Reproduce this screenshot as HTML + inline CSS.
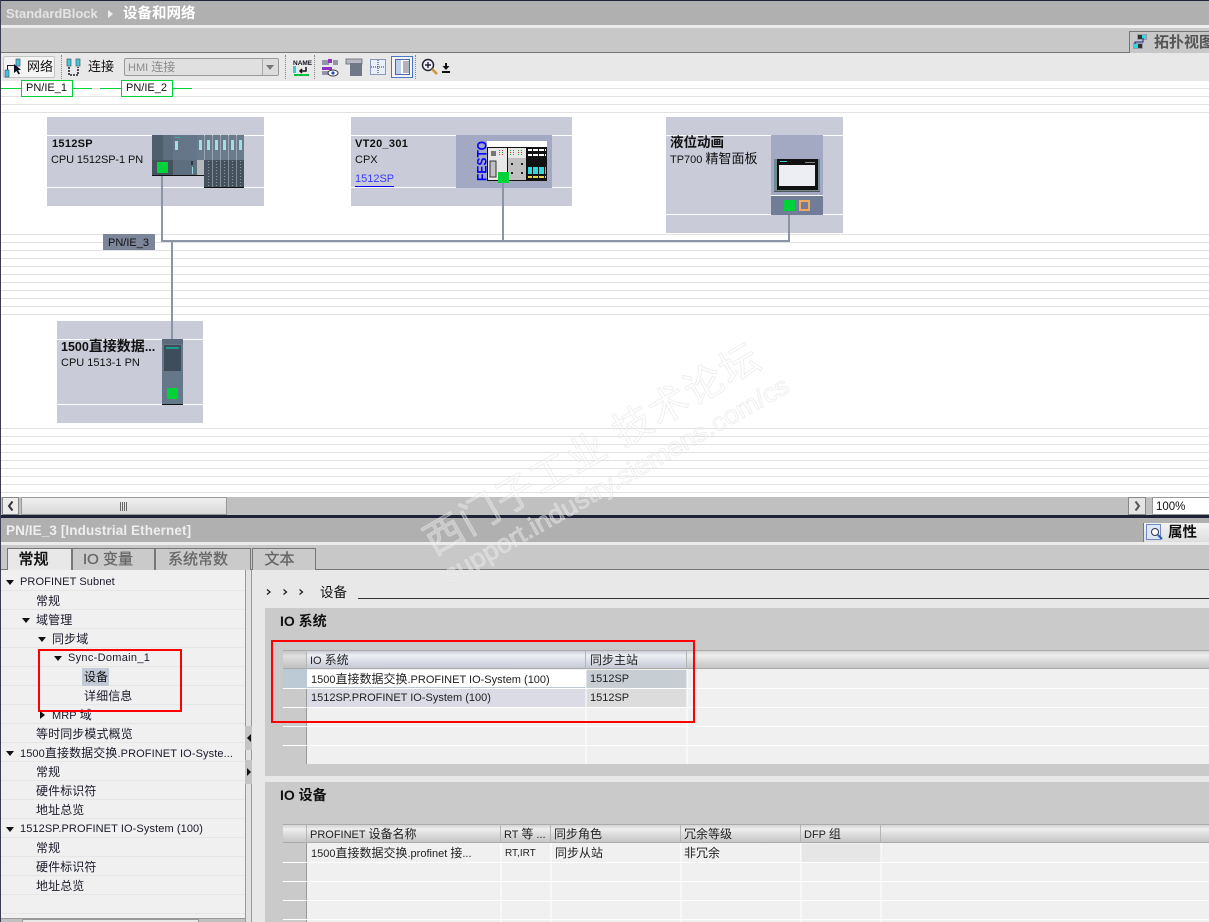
<!DOCTYPE html>
<html><head><meta charset="utf-8"><style>
html,body{margin:0;padding:0;width:1209px;height:922px;overflow:hidden;background:#fff}
body{position:relative;font:11px "Liberation Sans","Noto Sans CJK SC",sans-serif;color:#111}
div,span.a,a.a{position:absolute;white-space:nowrap;box-sizing:border-box}
i{font-style:normal;font-size:12px}
.r{left:1px;width:244px;height:19px;border-bottom:1px solid #e6e6e6;line-height:21px;color:#1a1a2a;letter-spacing:.1px}
.t{line-height:15px}
.up{border-left:4px solid transparent;border-right:4px solid transparent;border-top:5px solid #111;width:0;height:0}
.rt{border-top:4px solid transparent;border-bottom:4px solid transparent;border-left:5px solid #111;width:0;height:0}
.tab{top:548px;height:22px;background:#cacaca;border:1px solid #777;border-bottom:none;text-align:center;line-height:21px;font-size:15px;font-weight:normal;color:#666;-webkit-text-stroke:.3px #666}
.tab i{font-size:15px}
.sep{top:55px;height:24px;width:0;border-left:1px dotted #888}
.th{height:19px;background:linear-gradient(#d4d4d4,#eeeeee 25%,#dcdcdc 55%,#c6c6c6);border-top:1px solid #aaa;border-right:1px solid #b5b5b5;border-bottom:1px solid #aaa;line-height:19px;padding-left:3px;color:#222}
.th2{background:linear-gradient(#c8ccd4,#eef0f4 25%,#dde0e8 55%,#c6cad4)}
.c{height:19px;line-height:18px;padding-left:4px;color:#222}
</style></head><body>
<!-- chrome -->
<div style="left:0;top:0;width:1209px;height:1px;background:#1f2338"></div>
<div style="left:0;top:1px;width:1209px;height:24px;background:#b0b0b0"></div>
<div style="left:0;top:25px;width:1209px;height:3px;background:#ececec"></div>
<div style="left:0;top:28px;width:1209px;height:24px;background:#c8c8c8"></div>
<div style="left:0;top:52px;width:1209px;height:1px;background:#777"></div>
<div style="left:0;top:53px;width:1209px;height:28px;background:#e8e8e8"></div>
<div style="left:6px;top:5px;font-size:13px;font-weight:bold;color:#e4e4e4;line-height:18px">StandardBlock</div>
<div class="rt" style="left:108px;top:10px;border-left-color:#eee"></div>
<div style="left:123px;top:5px;font-size:14.5px;font-weight:bold;color:#fff;line-height:18px">设备和网络</div>
<div style="left:1129px;top:31px;width:80px;height:22px;background:#c8c8c8;border-left:1px solid #777;border-top:1px solid #777;font-size:15px;font-weight:bold;color:#555;padding-left:24px;line-height:21px;overflow:hidden">拓扑视图</div>
<svg style="position:absolute;left:1132px;top:33px" width="16" height="17" shape-rendering="crispEdges">
<rect x="5" y="1" width="10" height="6" fill="#9a9eac"/><rect x="6" y="2" width="4" height="4" fill="#333"/><rect x="10" y="2" width="4" height="4" fill="#30d8e0"/>
<rect x="1" y="10" width="10" height="6" fill="#9a9eac"/><rect x="2" y="11" width="4" height="4" fill="#30d8e0"/><rect x="6" y="11" width="4" height="4" fill="#333"/>
<path d="M11 5V9H3V11" fill="none" stroke="#112080" stroke-width="1"/></svg>

<!-- canvas lines -->
<svg style="position:absolute;left:0;top:81px" width="1209" height="416" shape-rendering="crispEdges">
<g stroke="#e2e2e2" stroke-width="1">
<path d="M0 7.5H1209M0 15.5H1209M0 23.5H1209M0 31.5H1209"/>
<path d="M0 153.5H1209M0 161.5H1209M0 169.5H1209M0 177.5H1209M0 185.5H1209M0 193.5H1209M0 201.5H1209M0 209.5H1209M0 217.5H1209M0 225.5H1209M0 233.5H1209"/>
<path d="M0 347.5H1209M0 355.5H1209M0 363.5H1209M0 371.5H1209M0 379.5H1209M0 387.5H1209M0 395.5H1209M0 403.5H1209M0 411.5H1209"/>
</g></svg>

<!-- subnets -->
<svg style="position:absolute;left:0;top:80px" width="200" height="18" shape-rendering="crispEdges">
<path d="M1 8.5H92M100 8.5H192" stroke="#00d23a" stroke-width="1.4"/></svg>
<div style="left:21px;top:80px;width:52px;height:17px;background:#fff;border:1px solid #00d23a;text-align:center;line-height:15px;font-size:11px;padding-right:1px">PN/IE_1</div>
<div style="left:121px;top:80px;width:52px;height:17px;background:#fff;border:1px solid #00d23a;text-align:center;line-height:15px;font-size:11px;padding-right:1px">PN/IE_2</div>

<!-- device boxes -->
<div style="left:47px;top:117px;width:217px;height:89px;background:#c9cbd9"></div>
<div style="left:351px;top:117px;width:221px;height:89px;background:#c9cbd9"></div>
<div style="left:666px;top:117px;width:177px;height:116px;background:#c9cbd9"></div>
<div style="left:57px;top:321px;width:146px;height:102px;background:#c9cbd9"></div>
<svg style="position:absolute;left:0;top:0" width="1209" height="500" shape-rendering="crispEdges">
<g fill="#fff">
<rect x="47" y="135" width="217" height="1"/><rect x="47" y="187" width="217" height="1"/>
<rect x="351" y="135" width="221" height="1"/><rect x="351" y="187" width="221" height="1"/>
<rect x="666" y="135" width="177" height="1"/><rect x="666" y="214" width="177" height="1"/>
<rect x="57" y="339" width="146" height="1"/><rect x="57" y="404" width="146" height="1"/>
</g>
<!-- CPU 1512SP -->
<rect x="152" y="135" width="45" height="40" fill="#647687"/>
<rect x="152" y="135" width="11" height="25" fill="#4f5e6c"/>
<rect x="163" y="135" width="10" height="25" fill="#5d6e7e"/>
<rect x="152" y="160" width="21" height="15" fill="#46535f"/>
<rect x="173" y="160" width="24" height="15" fill="#5d6e7e"/>
<rect x="175" y="137" width="6" height="1" fill="#3aa89a"/>
<rect x="175" y="141" width="3" height="9" fill="#a8dde0"/>
<rect x="191" y="161" width="2" height="4" fill="#2c3640"/><rect x="192" y="167" width="1" height="7" fill="#9fd8dc"/>
<rect x="152" y="175" width="52" height="1" fill="#111"/>
<rect x="197" y="160" width="7" height="15" fill="#b5b8bc"/>
<rect x="197" y="135" width="7.5" height="25" fill="#6a7c8c"/><rect x="199" y="140" width="3" height="10" fill="#a8dde0"/>
<rect x="205" y="135" width="7.5" height="25" fill="#6a7c8c"/><rect x="207" y="140" width="3" height="10" fill="#a8dde0"/>
<rect x="213" y="135" width="7.5" height="25" fill="#6a7c8c"/><rect x="215" y="140" width="3" height="10" fill="#a8dde0"/>
<rect x="221" y="135" width="7.5" height="25" fill="#6a7c8c"/><rect x="223" y="140" width="3" height="10" fill="#a8dde0"/>
<rect x="229" y="135" width="7.5" height="25" fill="#6a7c8c"/><rect x="231" y="140" width="3" height="10" fill="#a8dde0"/>
<rect x="237" y="135" width="7" height="25" fill="#6a7c8c"/><rect x="239" y="140" width="3" height="10" fill="#a8dde0"/>
<rect x="204" y="160" width="40" height="27" fill="#46535f"/>
<path d="M212.5 160V187M220.5 160V187M228.5 160V187M236.5 160V187" stroke="#7e8c98" stroke-width="1" fill="none"/>
<path d="M208.5 161V186M216.5 161V186M224.5 161V186M232.5 161V186M240.5 161V186" stroke="#8a96a2" stroke-width="1" stroke-dasharray="1 2" fill="none"/>
<rect x="204" y="187" width="40" height="1" fill="#111"/>
<rect x="157" y="162" width="11" height="11" fill="#00d23a"/>
<!-- Festo -->
<rect x="456" y="135" width="96" height="53" fill="#a4a9c3"/>
<rect x="487" y="141" width="60" height="6" fill="#fff"/>
<rect x="487" y="147" width="60" height="34" fill="#111"/>
<rect x="488" y="148" width="19" height="32" fill="#e8e8e8"/>
<rect x="508" y="148" width="18" height="32" fill="#c0c0c0"/>
<rect x="508" y="148" width="18" height="10" fill="#e8e8e8"/>
<rect x="490" y="161" width="6" height="16" fill="#c0c0c0" stroke="#333" stroke-width="1"/>
<rect x="491" y="151" width="5" height="5" fill="#777"/>
<path d="M499 150h1v1h-1zM502 150h1v1h-1zM499 154h1v1h-1zM502 154h1v1h-1z" fill="#d33"/><path d="M499 152h1v1h-1zM502 152h1v1h-1z" fill="#2a2"/>
<path d="M510 150h1v1h-1zM513 150h1v1h-1zM518 150h1v1h-1zM521 150h1v1h-1zM510 154h1v1h-1zM513 154h1v1h-1zM518 154h1v1h-1zM521 154h1v1h-1z" fill="#2a2"/>
<path d="M510 152h1v1h-1zM513 152h1v1h-1zM518 152h1v1h-1zM521 152h1v1h-1z" fill="#d33"/>
<path d="M511 163h2v2h-2zM521 163h2v2h-2zM511 172h2v2h-2zM521 172h2v2h-2z" fill="#222"/>
<rect x="528" y="149" width="18" height="2" fill="#fff"/><rect x="528" y="154" width="18" height="2" fill="#fff"/>
<rect x="528" y="167" width="18" height="7" fill="#30d8e0"/>
<rect x="528" y="176" width="18" height="2" fill="#e8d848"/>
<path d="M532.5 147V181M538.5 147V181M544.5 147V181" stroke="#111" stroke-width="1.4" fill="none"/>
<rect x="498" y="172" width="11" height="11" fill="#00d23a"/>
<!-- HMI -->
<rect x="771" y="135" width="52" height="60" fill="#a4a9c3"/>
<rect x="771" y="195" width="52" height="1" fill="#fff"/>
<rect x="771" y="196" width="52" height="19" fill="#717d97"/>
<rect x="774" y="159" width="46" height="33" fill="#6f8a90"/>
<rect x="777" y="159" width="41" height="31" fill="#111"/>
<rect x="779" y="165" width="36" height="21" fill="#eceef4"/>
<rect x="780" y="161" width="7" height="1" fill="#40c8d0"/><rect x="805" y="162" width="10" height="1" fill="#888"/>
<rect x="774" y="191" width="46" height="1" fill="#555"/>
<rect x="784" y="200" width="11" height="11" fill="#00d23a"/>
<rect x="800" y="201" width="9" height="9" fill="#717d97" stroke="#f0a860" stroke-width="2"/>
<!-- CPU 1513 -->
<rect x="162" y="339" width="21" height="65" fill="#64788a"/>
<rect x="162" y="339" width="21" height="5" fill="#5a6a7a"/>
<rect x="164" y="345" width="17" height="26" fill="#3f4c5c"/>
<rect x="166" y="347" width="13" height="2" fill="#1f9a8e"/>
<rect x="162" y="404" width="21" height="1" fill="#111"/>
<rect x="167" y="388" width="11" height="11" fill="#00d23a"/>
<!-- wires -->
<g fill="#8c95a6">
<rect x="161" y="176" width="2" height="66"/>
<rect x="161" y="240" width="629" height="2"/>
<rect x="171" y="242" width="2" height="97"/>
<rect x="502" y="183" width="2" height="58"/>
<rect x="788" y="215" width="2" height="26"/>
</g>
<rect x="103" y="234" width="52" height="16" fill="#7d8599"/>
</svg>
<div style="left:103px;top:235px;width:52px;text-align:center;line-height:16px;color:#111;font-size:11px;padding-right:1px">PN/IE_3</div>

<div class="t" style="left:52px;top:137px;font-weight:bold;letter-spacing:.3px">1512SP</div>
<div class="t" style="left:51px;top:153px;letter-spacing:-.1px">CPU 1512SP-1 PN</div>
<div class="t" style="left:355px;top:137px;font-weight:bold;letter-spacing:.3px">VT20_301</div>
<div class="t" style="left:355px;top:153px">CPX</div>
<div class="t" style="left:355px;top:172px;height:15px;color:#3a3aff;border-bottom:1px solid #00f">1512SP</div>
<div class="t" style="left:670px;top:135px;font-weight:bold"><i style="font-size:13.5px">液位动画</i></div>
<div class="t" style="left:670px;top:151px">TP700 <i style="font-size:13px">精智面板</i></div>
<div class="t" style="left:61px;top:339px;font-weight:bold;font-size:12.500px">1500<i style="font-size:14px">直接数据</i>...</div>
<div class="t" style="left:61px;top:356px">CPU 1513-1 PN</div>
<div style="left:477px;top:141px;width:10px;height:40px"><svg width="10" height="40"><text transform="translate(9.500,40) rotate(-90)" font-family="Liberation Sans" font-weight="bold" font-size="13.500" fill="#0000ff" textLength="40" lengthAdjust="spacingAndGlyphs">FESTO</text></svg></div>

<!-- toolbar -->
<div style="left:3px;top:56px;width:52px;height:22px;background:#f4f4f4;border:1px solid #c4c4c4;border-radius:2px;font-size:13px;line-height:20px;padding-left:23px">网络</div>
<svg style="position:absolute;left:0;top:53px" width="460" height="28">
<path d="M7.500 17V12.500H15" fill="none" stroke="#223" stroke-width="1"/>
<rect x="5" y="17" width="4" height="7" fill="#3cc8d8" stroke="#556" stroke-width=".7"/>
<rect x="16" y="6" width="4" height="7" fill="#3cc8d8" stroke="#556" stroke-width=".7"/>
<path d="M14 11l0 9 2.500-2 2 3.500 1.500-1-2-3.300 3-.5z" fill="#112"/>
<rect x="67" y="6" width="4" height="7" fill="#3cc8d8" stroke="#556" stroke-width=".7"/>
<rect x="76" y="6" width="4" height="7" fill="#3cc8d8" stroke="#556" stroke-width=".7"/>
<path d="M69 14V22H78V14" fill="none" stroke="#223" stroke-width="1.600" stroke-dasharray="2 1"/>
<text x="293" y="12" font-family="Liberation Sans" font-size="6.500" font-weight="bold" fill="#112">NAME</text>
<rect x="293" y="13" width="3" height="7" fill="#3cc8d8"/>
<path d="M306 14v4h-6M302 16l-2 2 2 2" fill="none" stroke="#112" stroke-width="1.500"/>
<rect x="294" y="21" width="15" height="2" fill="#00c040"/>
<rect x="322" y="7" width="7" height="5" fill="#8f96a8"/><rect x="333" y="7" width="5" height="5" fill="#8f96a8"/>
<rect x="328" y="6" width="4" height="4" fill="#9030c0"/><rect x="322" y="14" width="10" height="3" fill="#9030c0"/>
<rect x="322" y="18" width="6" height="4" fill="#8f96a8"/>
<ellipse cx="333" cy="20" rx="5" ry="3" fill="#fff" stroke="#334"/><circle cx="333" cy="20" r="1.600" fill="#2050c0"/>
<rect x="346" y="6" width="16" height="5" fill="#b8b8c0" stroke="#667" stroke-width=".8"/>
<rect x="350" y="10" width="12" height="13" fill="#707888"/>
<rect x="370.500" y="6.500" width="15" height="15" fill="#e8eefa" stroke="#8898b8"/>
<path d="M371 14h14M378 7v14" stroke="#334" stroke-dasharray="1 1"/>
<rect x="391.500" y="3.500" width="21" height="21" fill="#f4f4f4" stroke="#4a78c8"/>
<rect x="395.500" y="6.500" width="14" height="15" fill="#fff" stroke="#4a68a8"/>
<rect x="396" y="7" width="5" height="14" fill="#bcd0ee"/>
<path d="M403 9h6M403 11h6M403 13h6M403 15h6M403 17h6M403 19h6" stroke="#667" stroke-width="1"/>
<circle cx="428" cy="12" r="5.500" fill="#eef" stroke="#223" stroke-width="1.500"/>
<path d="M425 12h6M428 9v6" stroke="#223" stroke-width="1.400"/>
<path d="M432 16l5 5" stroke="#c89838" stroke-width="2.500"/>
<path d="M445 10h2v3h2.500l-3.500 4-3.500-4h2.500z" fill="#111"/><rect x="442" y="18" width="8" height="2" fill="#111"/>
</svg>
<div class="sep" style="left:61px"></div><div class="sep" style="left:285px"></div><div class="sep" style="left:314px"></div><div class="sep" style="left:415px"></div>
<div style="left:88px;top:57px;font-size:13px;line-height:20px">连接</div>
<div style="left:124px;top:58px;width:155px;height:18px;background:#e0e0e0;border:1px solid #999;border-radius:2px;color:#8a8a8a;line-height:17px;padding-left:3px">HMI <i>连接</i></div>
<div style="left:262px;top:59px;width:16px;height:16px;background:#dcdcdc;border-left:1px solid #aaa"></div>
<div class="up" style="left:266px;top:65px;border-top-color:#777"></div>

<!-- h scroll -->
<div style="left:0;top:497px;width:1209px;height:18px;background:#c0c0c0"></div>
<div style="left:2px;top:497px;width:17px;height:18px;background:#ececec;border:1px solid #888"></div>
<svg style="position:absolute;left:2px;top:497px" width="17" height="18"><path d="M10.500 4.500L7 9l3.500 4.500" fill="none" stroke="#333" stroke-width="2"/></svg>
<div style="left:21px;top:497px;width:206px;height:18px;background:linear-gradient(#f0f0f0,#d8d8d8);border:1px solid #999"></div>
<div style="left:120px;top:502px;width:8px;height:9px;background:repeating-linear-gradient(90deg,#666 0 1px,transparent 1px 2px)"></div>
<div style="left:1128px;top:497px;width:18px;height:18px;background:#e4e4e4;border:1px solid #888"></div>
<svg style="position:absolute;left:1128px;top:497px" width="18" height="18"><path d="M7.500 4.500L11 9l-3.500 4.500" fill="none" stroke="#555" stroke-width="2"/></svg>
<div style="left:1152px;top:497px;width:57px;height:18px;background:#fff;border:1px solid #999;border-right:none;padding-left:3px;line-height:18px;font-size:11.500px">100%</div>

<!-- inspector chrome -->
<div style="left:0;top:515px;width:1209px;height:3px;background:#1f2338"></div>
<div style="left:0;top:518px;width:1209px;height:24px;background:#b0b0b0"></div>
<div style="left:0;top:542px;width:1209px;height:3px;background:#ececec"></div>
<div style="left:0;top:545px;width:1209px;height:24px;background:#c8c8c8"></div>
<div style="left:0;top:569px;width:1209px;height:1px;background:#777"></div>
<div style="left:0;top:570px;width:1209px;height:352px;background:#e8e8e8"></div>
<div style="left:6px;top:522px;font-size:13.500px;font-weight:bold;color:#eee;line-height:18px;letter-spacing:.1px">PN/IE_3 [Industrial Ethernet]</div>
<div style="left:1143px;top:523px;width:66px;height:19px;background:linear-gradient(#f4f4f4,#dedede);border-left:1px solid #777;font-size:14.500px;font-weight:bold;color:#111;padding-left:24px;line-height:21px">属性</div>
<svg style="position:absolute;left:1146px;top:524px" width="18" height="18"><rect x=".5" y=".5" width="14" height="15" fill="#dfe6fa" stroke="#7088c8"/><circle cx="9" cy="8" r="3.500" fill="#fff" stroke="#334"/><path d="M12 11l4 4" stroke="#2060b0" stroke-width="2"/></svg>
<div class="tab" style="left:7px;width:65px;background:#e8e8e8;color:#111;height:23px;padding-right:12px;-webkit-text-stroke:.5px #111"><i>常规</i></div>
<div class="tab" style="left:72px;width:83px;padding-right:11px">IO 变量</div>
<div class="tab" style="left:155px;width:96px;padding-right:10px">系统常数</div>
<div class="tab" style="left:252px;width:64px;padding-right:9px">文本</div>

<!-- tree -->
<div style="left:1px;top:570px;width:244px;height:352px;background:#f0f0f0"></div>
<div class="r" style="top:572px;padding-left:19px">PROFINET Subnet</div><div class="up" style="left:6px;top:580px"></div>
<div class="r" style="top:591px;padding-left:35px"><i>常规</i></div>
<div class="r" style="top:610px;padding-left:35px"><i>域管理</i></div><div class="up" style="left:22px;top:618px"></div>
<div class="r" style="top:629px;padding-left:51px"><i>同步域</i></div><div class="up" style="left:38px;top:637px"></div>
<div class="r" style="top:648px;padding-left:67px;letter-spacing:.3px">Sync-Domain_1</div><div class="up" style="left:54px;top:656px"></div>
<div class="r" style="top:667px"></div><div style="left:82px;top:668px;width:27px;height:18px;background:#c1cad6;line-height:18px;padding-left:2px"><i>设备</i></div>
<div class="r" style="top:686px;padding-left:83px"><i>详细信息</i></div>
<div class="r" style="top:705px;padding-left:51px">MRP <i>域</i></div><div class="rt" style="left:40px;top:711px"></div>
<div class="r" style="top:724px;padding-left:35px"><i>等时同步模式概览</i></div>
<div class="r" style="top:743px;padding-left:19px">1500<i>直接数据交换</i>.PROFINET IO-Syste...</div><div class="up" style="left:6px;top:751px"></div>
<div class="r" style="top:762px;padding-left:35px"><i>常规</i></div>
<div class="r" style="top:781px;padding-left:35px"><i>硬件标识符</i></div>
<div class="r" style="top:800px;padding-left:35px"><i>地址总览</i></div>
<div class="r" style="top:819px;padding-left:19px">1512SP.PROFINET IO-System (100)</div><div class="up" style="left:6px;top:827px"></div>
<div class="r" style="top:838px;padding-left:35px"><i>常规</i></div>
<div class="r" style="top:857px;padding-left:35px"><i>硬件标识符</i></div>
<div class="r" style="top:876px;padding-left:35px"><i>地址总览</i></div>
<div class="r" style="top:895px"></div>
<div style="left:1px;top:918px;width:244px;height:4px;background:#c0c0c0;border-top:1px solid #999"></div>
<div style="left:22px;top:919px;width:177px;height:3px;background:#e8e8e8;border:1px solid #999;border-bottom:none"></div>
<!-- splitter -->
<div style="left:245px;top:570px;width:7px;height:352px;background:#e2e2e2;border-left:1px solid #999;border-right:1px solid #999"></div>
<div style="left:245px;top:726px;width:7px;height:24px;background:#c4c4c4"></div>
<div style="left:245px;top:760px;width:7px;height:24px;background:#c4c4c4"></div>
<div class="rt" style="left:247px;top:734px;border-left:none;border-right:4px solid #111"></div>
<div class="rt" style="left:247px;top:768px;border-left-width:4px"></div>

<!-- breadcrumb -->
<svg style="position:absolute;left:264px;top:586px" width="42" height="12"><g fill="none" stroke="#222" stroke-width="1.300"><path d="M3 3.500L6 6 3 8.500M19.500 3.500L22.500 6 19.500 8.500M35.500 3.500L38.500 6 35.500 8.500"/></g></svg>
<div style="left:320px;top:584px;font-size:13.500px;line-height:17px">设备</div>
<div style="left:358px;top:598px;width:851px;height:1px;background:#333"></div>

<!-- IO system -->
<div style="left:265px;top:608px;width:944px;height:168px;background:#cacaca"></div>
<div style="left:280px;top:613px;font-size:14px;font-weight:bold;line-height:17px">IO 系统</div>
<div style="left:283px;top:650px;width:926px;height:114px;background:#f0f0f0"></div>
<div class="th" style="left:283px;top:650px;width:24px;background:linear-gradient(#c4c4c4,#e0e0e0 30%,#c0c0c0)"></div>
<div class="th th2" style="left:307px;top:650px;width:279px">IO <i>系统</i></div>
<div class="th th2" style="left:586px;top:650px;width:101px;padding-left:4px"><i>同步主站</i></div>
<div class="th" style="left:687px;top:650px;width:522px;border-right:none"></div>
<div style="left:283px;top:669px;width:24px;height:19px;background:#bccad6"></div>
<div style="left:283px;top:688px;width:24px;height:76px;background:#cacaca;border-right:1px solid #999"></div>
<div class="c" style="left:307px;top:670px;width:279px;height:18px;background:#fff;border-bottom:1px solid #bcc8d4;font-size:11px">1500<i>直接数据交换</i>.PROFINET IO-System (100)</div>
<div class="c" style="left:586px;top:670px;width:101px;height:18px;background:#c6ced4">1512SP</div>
<div class="c" style="left:307px;top:689px;width:279px;height:18px;background:#dadbe5">1512SP.PROFINET IO-System (100)</div>
<div class="c" style="left:586px;top:689px;width:101px;height:18px;background:#dcdcdc">1512SP</div>
<svg style="position:absolute;left:283px;top:650px" width="926" height="114" shape-rendering="crispEdges"><path d="M0 38.500H926M0 57.500H926M0 76.500H926M0 95.500H926M404 19V114M303 19V114" stroke="#fff" fill="none"/></svg>

<!-- IO devices -->
<div style="left:265px;top:782px;width:944px;height:140px;background:#cacaca"></div>
<div style="left:280px;top:787px;font-size:14px;font-weight:bold;line-height:17px">IO 设备</div>
<div style="left:283px;top:824px;width:926px;height:98px;background:#f0f0f0"></div>
<div style="left:283px;top:843px;width:24px;height:79px;background:#cacaca;border-right:1px solid #999"></div>
<div class="th" style="left:283px;top:824px;width:24px"></div>
<div class="th" style="left:307px;top:824px;width:194px">PROFINET <i>设备名称</i></div>
<div class="th" style="left:501px;top:824px;width:50px">RT <i>等</i> ...</div>
<div class="th" style="left:551px;top:824px;width:130px"><i>同步角色</i></div>
<div class="th" style="left:681px;top:824px;width:120px"><i>冗余等级</i></div>
<div class="th" style="left:801px;top:824px;width:80px">DFP <i>组</i></div>
<div class="th" style="left:881px;top:824px;width:328px;border-right:none"></div>
<div style="left:801px;top:844px;width:80px;height:18px;background:#e6e6e6"></div>
<svg style="position:absolute;left:283px;top:843px" width="926" height="79" shape-rendering="crispEdges"><path d="M0 19.500H926M0 38.500H926M0 57.500H926M0 76.500H926M218 0V79M268 0V79M398 0V79M518 0V79M598 0V79" stroke="#fff" fill="none"/></svg>
<div class="c" style="left:307px;top:844px;padding-left:4px">1500<i>直接数据交换</i>.profinet <i>接</i>...</div>
<div class="c" style="left:501px;top:844px;font-size:10px;line-height:20px">RT,IRT</div>
<div class="c" style="left:551px;top:844px;padding-left:4px"><i>同步从站</i></div>
<div class="c" style="left:681px;top:844px;padding-left:3px"><i>非冗余</i></div>

<!-- red highlights -->
<div style="left:38px;top:649px;width:144px;height:63px;border:2px solid #f00"></div>
<div style="left:271px;top:640px;width:424px;height:83px;border:2px solid #f00"></div>

<!-- left edge -->
<div style="left:0;top:0;width:1px;height:922px;background:#3a3e50"></div>

<!-- watermark -->
<svg style="position:absolute;left:0;top:0;pointer-events:none" width="1209" height="922">
<g font-family="'Liberation Sans','Noto Sans CJK SC',sans-serif" fill="#fff" fill-opacity=".3" stroke="#e2e2e2" stroke-opacity=".6" stroke-width=".9">
<text transform="translate(434,556) rotate(-30)" font-size="39" letter-spacing="2">西门子工业 技术论坛</text>
<text transform="translate(450,584) rotate(-29.500)" font-size="26" textLength="392" lengthAdjust="spacingAndGlyphs">support.industry.siemens.com/cs</text>
</g></svg>
</body></html>
